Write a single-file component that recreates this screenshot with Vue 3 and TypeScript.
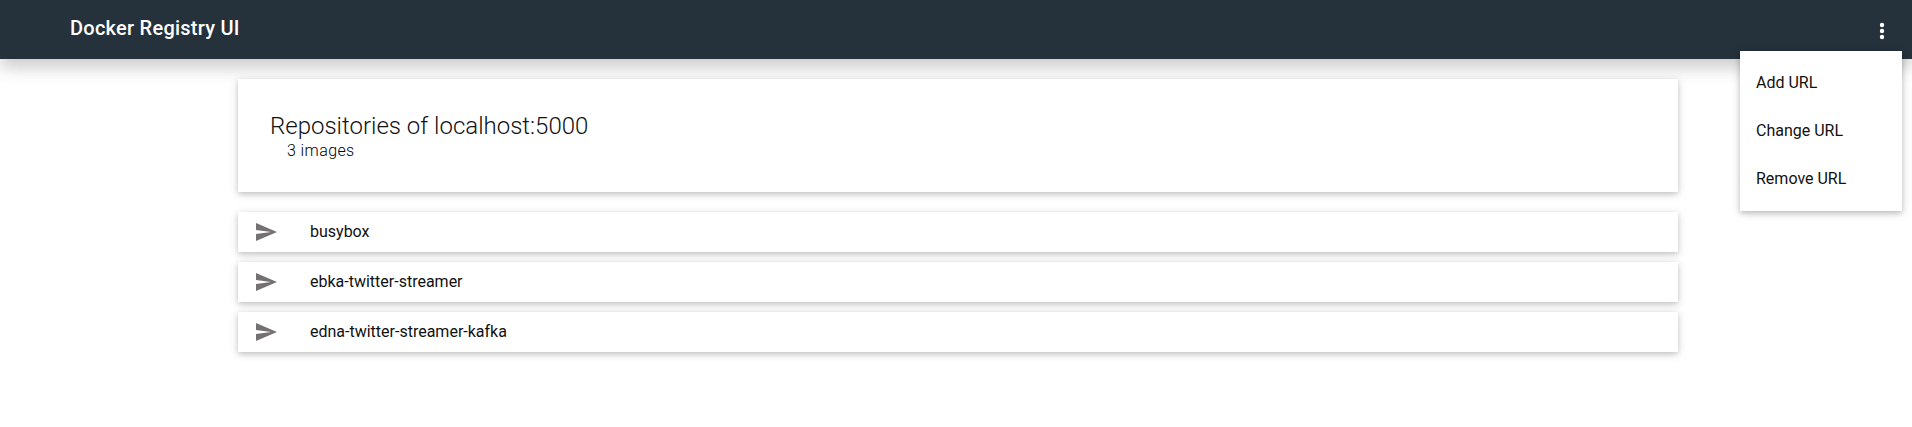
<script setup lang="ts">
const menuItems: string[] = ['Add URL', 'Change URL', 'Remove URL']
const repositories: string[] = ['busybox', 'ebka-twitter-streamer', 'edna-twitter-streamer-kafka']
const registry = 'localhost:5000'
</script>

<template>
  <div class="app">
    <header class="navbar">
      <span class="logo">Docker Registry UI</span>
      <div class="menu">
        <button class="menu-toggle" aria-label="Menu">
          <svg viewBox="0 0 24 24" width="24" height="24">
            <circle cx="12" cy="6" r="2.2" />
            <circle cx="12" cy="12" r="2.2" />
            <circle cx="12" cy="18" r="2.2" />
          </svg>
        </button>
        <ul class="dropdown">
          <li v-for="item in menuItems" :key="item">{{ item }}</li>
        </ul>
      </div>
    </header>
    <main class="content">
      <section class="card title-card">
        <h2>Repositories of {{ registry }}</h2>
        <div class="count">{{ repositories.length }} images</div>
      </section>
      <section v-for="repo in repositories" :key="repo" class="card row">
        <svg class="send" viewBox="0 0 24 24" width="24" height="24">
          <path d="M2.01 21L23 12 2.01 3 2 10l15 2-15 2z" />
        </svg>
        <span class="name">{{ repo }}</span>
      </section>
    </main>
  </div>
</template>

<style>
html,
body {
  background: #fff;
  overflow: hidden;
}
</style>

<style scoped>
.app {
  font-family: Roboto, "Liberation Sans", sans-serif;
  font-size: 16px;
  color: #111;
}
.navbar {
  box-sizing: border-box;
  height: 59px;
  padding: 0 18px 0 70px;
  display: flex;
  align-items: center;
  justify-content: space-between;
  background: #25313b;
  box-shadow: 0 8px 17px 0 rgba(0, 0, 0, 0.13), 0 6px 20px 0 rgba(0, 0, 0, 0.11);
}
.logo {
  color: #fff;
  font-size: 20px;
  font-weight: 500;
  letter-spacing: 0.25px;
  line-height: 24px;
  padding-bottom: 3px;
}
.menu {
  position: relative;
}
.menu-toggle {
  display: block;
  border: 0;
  padding: 0;
  margin-top: 3px;
  background: none;
  width: 24px;
  height: 24px;
  fill: #fff;
}
.dropdown {
  position: absolute;
  z-index: 2;
  top: 35px;
  right: -8px;
  box-sizing: border-box;
  width: 162px;
  margin: 0;
  padding: 8px 0;
  list-style: none;
  background: #fff;
  box-shadow: 0 2px 5px 0 rgba(0, 0, 0, 0.18), 0 2px 10px 0 rgba(0, 0, 0, 0.14);
}
.dropdown li {
  padding: 0 16px;
  line-height: 48px;
}
.content {
  width: 1440px;
  margin: 20px 0 0 238px;
}
.card {
  background: #fff;
  box-sizing: border-box;
  box-shadow: 0 2px 5px 0 rgba(0, 0, 0, 0.16), 0 2px 10px 0 rgba(0, 0, 0, 0.12);
}
.title-card {
  height: 113px;
  padding: 33px 32px 32px;
  margin-bottom: 20px;
  font-weight: 300;
}
h2 {
  margin: 0;
  font-size: 24px;
  font-weight: 300;
  line-height: 29px;
}
.count {
  padding-left: 17px;
  letter-spacing: 0.4px;
  line-height: 20px;
  color: #000;
}
.row {
  display: flex;
  align-items: center;
  height: 40px;
  margin-bottom: 10px;
  padding-left: 16px;
}
.name {
  padding-bottom: 2px;
}
.send {
  fill: #757171;
  margin-right: 32px;
}
</style>
